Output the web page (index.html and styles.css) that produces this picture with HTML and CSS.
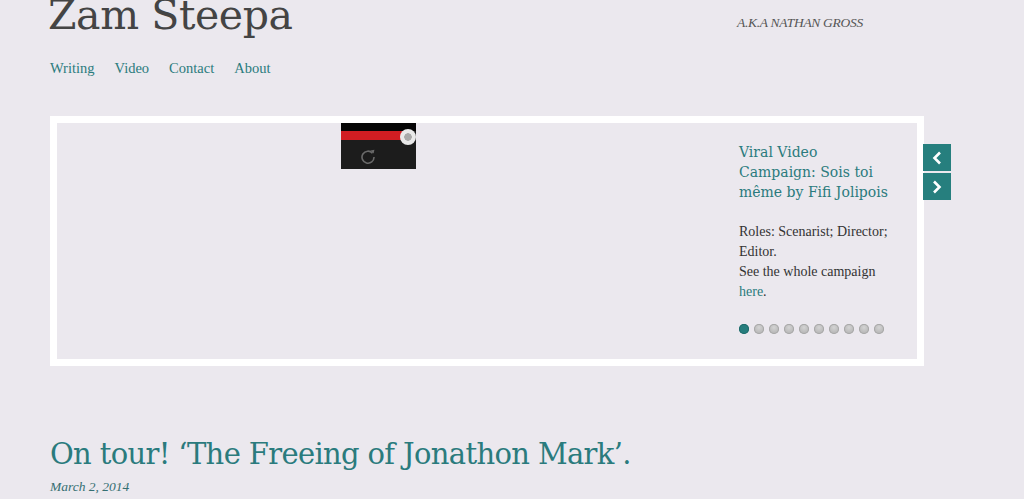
FILE: index.html
```html
<!DOCTYPE html>
<html>
<head>
<meta charset="utf-8">
<link rel="stylesheet" href="styles.css">
</head>
<body>
<div class="page">
  <header class="masthead">
    <h1 class="site-title">Zam Steepa</h1>
    <p class="tagline">A.K.A NATHAN GROSS</p>
  </header>
  <nav class="main-nav">
    <a href="#">Writing</a>
    <a href="#">Video</a>
    <a href="#">Contact</a>
    <a href="#">About</a>
  </nav>

  <section class="slider">
    <div class="slide">
      <div class="slide-media">
        <div class="thumb">
          <div class="thumb-top"></div>
          <div class="thumb-bar"></div>
          <span class="thumb-knob"></span>
          <div class="thumb-body">
            <svg width="16" height="16" viewBox="0 0 16 16"><path d="M12.5 5.2A6 6 0 1 0 14 9" fill="none" stroke="#6a6a6a" stroke-width="1.6"/><path d="M10.5 2.5 L13.6 5.6 L14.4 1.8 Z" fill="#6a6a6a"/></svg>
          </div>
        </div>
      </div>
      <div class="slide-info">
        <h2 class="slide-title">Viral Video<br>Campaign: Sois toi même by Fifi Jolipois</h2>
        <p class="slide-text">Roles: Scenarist; Director; Editor.<br>See the whole campaign <a href="#">here</a>.</p>
        <ul class="dots">
          <li class="dot active"></li><li class="dot"></li><li class="dot"></li><li class="dot"></li><li class="dot"></li><li class="dot"></li><li class="dot"></li><li class="dot"></li><li class="dot"></li><li class="dot"></li>
        </ul>
      </div>
    </div>
    <div class="arrows">
      <a class="arrow" href="#"><svg width="12" height="14" viewBox="0 0 12 14"><path d="M9 1.5 L3.5 7 L9 12.5" fill="none" stroke="#fff" stroke-width="2.6"/></svg></a>
      <a class="arrow" href="#"><svg width="12" height="14" viewBox="0 0 12 14"><path d="M3 1.5 L8.5 7 L3 12.5" fill="none" stroke="#fff" stroke-width="2.6"/></svg></a>
    </div>
  </section>

  <article class="post">
    <h2 class="post-title">On tour! ‘The Freeing of Jonathon Mark’.</h2>
    <p class="post-date">March 2, 2014</p>
  </article>
</div>
</body>
</html>
```

FILE: styles.css
```css
html, body {
  margin: 0;
  padding: 0;
}
body {
  background: #ebe8ee;
  font-family: "DejaVu Serif", "Liberation Serif", serif;
  color: #333;
  overflow: hidden;
}
.page {
  padding: 0 0 0 50px;
  width: 874px;
  position: relative;
}
.masthead {
  display: flex;
  align-items: flex-start;
  height: 48px;
}
.site-title {
  margin: -11px 0 0 -2px;
  font-family: "DejaVu Serif", serif;
  font-weight: normal;
  font-size: 41px;
  line-height: 52px;
  color: #444;
  letter-spacing: -0.4px;
  width: 689px;
  flex: none;
}
.tagline {
  margin: 15px 0 0 0;
  font-family: "Liberation Serif", serif;
  font-style: italic;
  font-size: 13.5px;
  color: #555;
  letter-spacing: -0.3px;
  white-space: nowrap;
}
.main-nav {
  display: flex;
  gap: 20px;
  height: 40px;
  margin-top: 12px;
}
.main-nav a {
  font-family: "Liberation Serif", serif;
  font-size: 14.5px;
  color: #2a7b7d;
  text-decoration: none;
  line-height: 16px;
}
.slider {
  position: relative;
  margin-top: 16px;
  border: 7px solid #fff;
  height: 236px;
}
.slide {
  display: flex;
  height: 100%;
}
.slide-media {
  flex: 1;
  padding-left: 284px;
}
.thumb {
  width: 75px;
  height: 46px;
  background: #1c1c1c;
  display: flex;
  flex-direction: column;
  position: relative;
  overflow: hidden;
}
.thumb-top {
  height: 8px;
  background: #050505;
}
.thumb-bar {
  height: 9px;
  background: #d11d22;
  margin-right: 11px;
}
.thumb-knob {
  position: absolute;
  left: 59px;
  top: 6px;
  width: 16px;
  height: 16px;
  border-radius: 50%;
  background: radial-gradient(circle, #a9a9a9 0 3.5px, #e9e9e9 4px);
}
.thumb-body {
  flex: 1;
  display: flex;
  align-items: center;
  padding-left: 19px;
  padding-top: 2px;
}
.slide-info {
  width: 162px;
  padding: 19px 16px 0 0;
  flex: none;
}
.slide-title {
  margin: 0;
  font-family: "DejaVu Serif", serif;
  font-weight: normal;
  font-size: 14px;
  line-height: 20px;
  color: #2a7b7d;
  letter-spacing: 0;
}
.slide-text {
  margin: 20px 0 0 0;
  font-family: "Liberation Serif", serif;
  font-size: 14px;
  line-height: 20px;
  color: #333;
}
.slide-text a {
  color: #2a7b7d;
  text-decoration: none;
}
.dots {
  list-style: none;
  margin: 22px 0 0 0;
  padding: 0;
  display: flex;
  gap: 5px;
}
.dot {
  width: 10px;
  height: 10px;
  border-radius: 50%;
  background: radial-gradient(circle at 50% 35%, #d4d4d4, #aaa);
  box-shadow: inset 0 0 0 1px #a8a8a8;
  flex: none;
}
.dot.active {
  background: #267d7d;
  box-shadow: inset 0 0 0 1px #1f6b6b;
}
.arrows {
  position: absolute;
  left: 866px;
  top: 21px;
  display: flex;
  flex-direction: column;
  gap: 2px;
}
.arrow {
  width: 28px;
  height: 27px;
  background: #267f7e;
  display: flex;
  align-items: center;
  justify-content: center;
}
.post {
  margin-top: 70px;
}
.post-title {
  margin: 0;
  font-family: "DejaVu Serif", serif;
  font-weight: normal;
  font-size: 29px;
  line-height: 36px;
  color: #2a7b7d;
  letter-spacing: -0.65px;
}
.post-date {
  margin: 7px 0 0 0;
  font-family: "Liberation Serif", serif;
  font-style: italic;
  font-size: 13.5px;
  color: #356f72;
}
```
